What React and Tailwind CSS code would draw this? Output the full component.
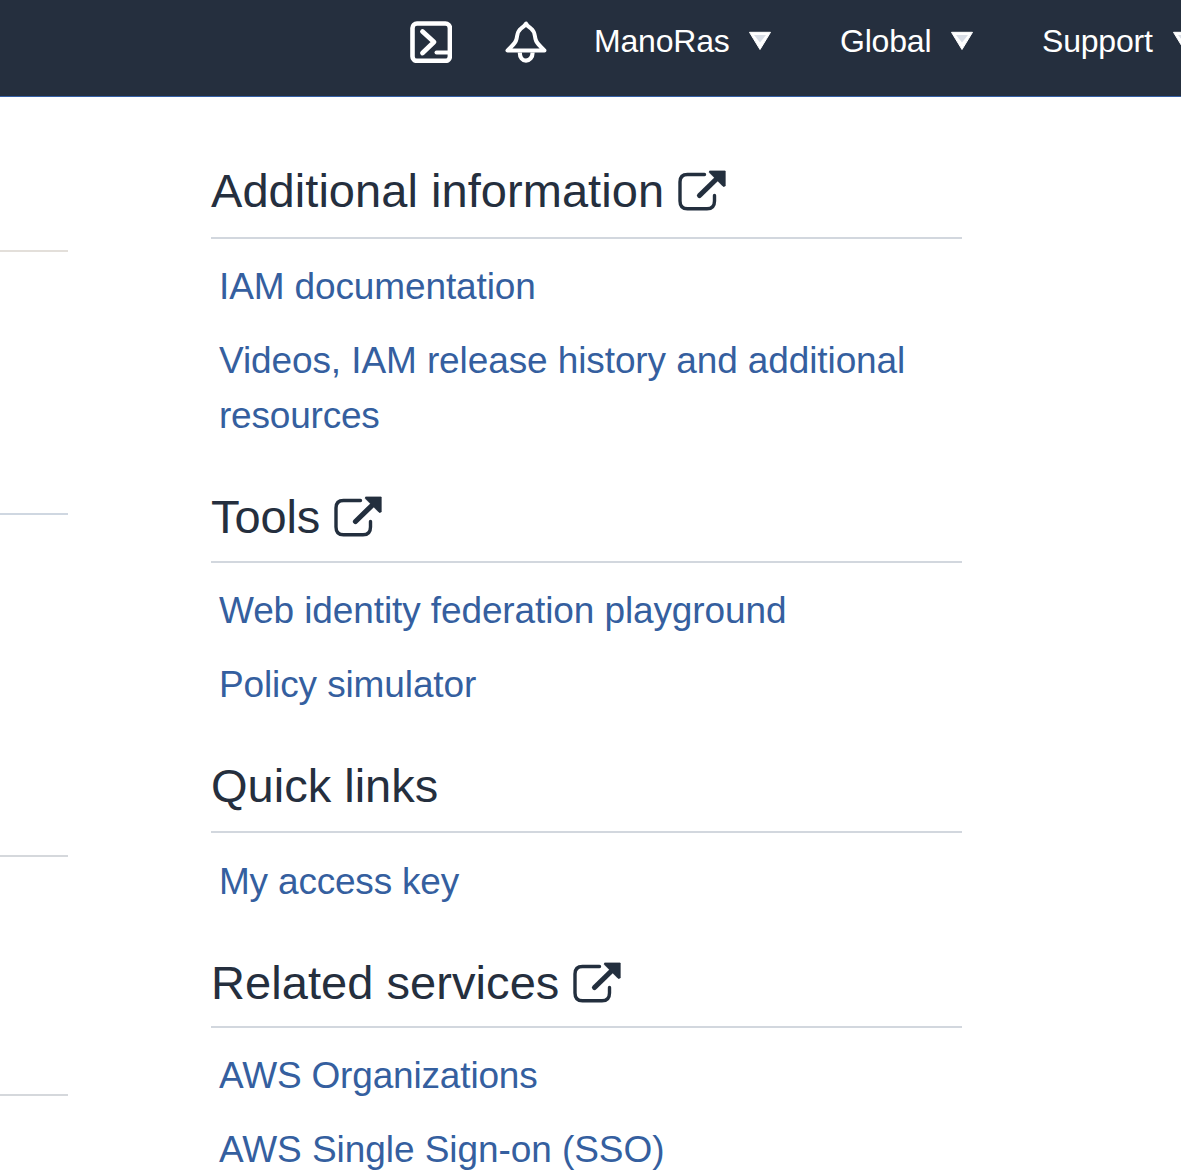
import React from "react";

const sections = [
  {
    title: "Additional information",
    external: true,
    spacing: "mt-[48px]",
    box: "h-[94px] pt-[16px]",
    titleTracking: "tracking-[0.05px]",
    listTop: "pt-[20px]",
    links: [
      { lines: ["IAM documentation"], tracking: ["tracking-[-0.12px]"] },
      {
        lines: ["Videos, IAM release history and additional", "resources"],
        tracking: ["tracking-[-0.1px]", "tracking-[-0.2px]"],
      },
    ],
  },
  {
    title: "Tools",
    external: true,
    spacing: "mt-[28px]",
    box: "h-[92px] pt-[16px]",
    titleTracking: "tracking-[-0.1px]",
    listTop: "pt-[20px]",
    links: [
      { lines: ["Web identity federation playground"], tracking: ["tracking-[-0.11px]"] },
      { lines: ["Policy simulator"], tracking: ["tracking-[-0.12px]"] },
    ],
  },
  {
    title: "Quick links",
    external: false,
    spacing: "mt-[28px]",
    box: "h-[93px] pt-[16px]",
    titleTracking: "tracking-[0px]",
    listTop: "pt-[21px]",
    links: [{ lines: ["My access key"], tracking: ["tracking-[-0.2px]"] }],
  },
  {
    title: "Related services",
    external: true,
    spacing: "mt-[28px]",
    box: "h-[91px] pt-[16px]",
    titleTracking: "tracking-[0.06px]",
    listTop: "pt-[20px]",
    links: [
      { lines: ["AWS Organizations"], tracking: ["tracking-[-0.17px]"] },
      { lines: ["AWS Single Sign-on (SSO)"], tracking: ["tracking-[-0.06px]"] },
    ],
  },
];

function ExternalIcon() {
  return (
    <svg className="ml-[13px] mt-[7px] h-[44px] w-[50px] shrink-0" viewBox="0 0 50 44" fill="none">
      <path
        d="M27.5 6.5H10.5Q3 6.5 3 14V33Q3 40.8 10.5 40.8H30Q37.5 40.8 37.5 33V27.5"
        stroke="#232f3e"
        strokeWidth="3.4"
        strokeLinecap="round"
      />
      <path d="M22.5 27.5L41 9.5" stroke="#232f3e" strokeWidth="5.2" strokeLinecap="round" />
      <path d="M32.5 3H48.2V18L46.2 18.4L32.4 4.6Z" fill="#232f3e" stroke="#232f3e" strokeWidth="0.8" strokeLinejoin="round" />
    </svg>
  );
}

function Caret() {
  return (
    <svg className="h-[20px] w-[24px] shrink-0" viewBox="0 0 24 20">
      <path d="M1.5 1.3H22.5L12 18.5Z" fill="#fff" stroke="#fff" strokeWidth="1" strokeLinejoin="round" />
      <path d="M6 4H18L12 11.5Z" fill="#d9dee6" />
    </svg>
  );
}

function Header() {
  return (
    <header className="flex h-[97px] w-full items-start overflow-hidden border-b border-[#3560a5] bg-[#252f3e] text-[32px] leading-[40px] text-white">
      <svg className="ml-[410px] mt-[21px] h-[42px] w-[42px] shrink-0" viewBox="0 0 42 42" fill="none" stroke="#fff">
        <rect x="2.5" y="2.5" width="37.4" height="37.4" rx="4.5" strokeWidth="4.6" />
        <path d="M12.5 10.5L24 21L12.5 32" strokeWidth="4.8" strokeLinecap="round" strokeLinejoin="round" />
        <path d="M26.5 31.5H40" strokeWidth="4" strokeLinecap="round" />
      </svg>
      <svg className="ml-[53px] mt-[21px] h-[42px] w-[42px] shrink-0" viewBox="0 0 42 42" fill="none" stroke="#fff">
        <path
          d="M21 2.5C20 5 18 6 16 7.5C12 10.5 12.5 14 11.5 18C10.5 23 6 25.5 2.5 29.5H39.5C36 25.5 31.5 23 30.5 18C29.5 14 30 10.5 26 7.5C24 6 22 5 21 2.5Z"
          strokeWidth="4"
          strokeLinejoin="round"
        />
        <path d="M14.8 31.5C14.8 36.5 17.5 39.6 21 39.6S27.6 36.5 27.6 31.5" strokeWidth="4.2" />
      </svg>
      <div className="ml-[47px] mt-[21px] flex w-[246px] shrink-0 items-center">
        <span className="w-[154px] tracking-[-0.2px]">ManoRas</span>
        <Caret />
      </div>
      <div className="mt-[21px] flex w-[202px] shrink-0 items-center">
        <span className="w-[110px] tracking-[-0.2px]">Global</span>
        <Caret />
      </div>
      <div className="mt-[21px] flex shrink-0 items-center">
        <span className="w-[130px] tracking-[-0.2px]">Support</span>
        <Caret />
      </div>
    </header>
  );
}

export default function App() {
  return (
    <div className="flex h-[1173px] w-[1181px] flex-col overflow-hidden bg-white font-['Liberation_Sans',Arial,sans-serif]">
      <Header />
      <div className="flex min-h-0 flex-1">
        <div className="w-[68px] shrink-0">
          <div className="mt-[153px] h-[2px] bg-[#e3dfda]" />
          <div className="mt-[261px] h-[2px] bg-[#cfd7e1]" />
          <div className="mt-[340px] h-[2px] bg-[#d5d8dc]" />
          <div className="mt-[237px] h-[2px] bg-[#d5d8dc]" />
        </div>
        <main className="ml-[143px] w-[751px] shrink-0">
          {sections.map((s) => (
            <section key={s.title} className={s.spacing}>
              <h2 className={"flex items-start border-b-2 border-[#d2d7de] text-[47px] leading-[60px] text-[#252f3e] " + s.box}>
                <span className={"whitespace-nowrap " + s.titleTracking}>{s.title}</span>
                {s.external && <ExternalIcon />}
              </h2>
              <div className={"flex flex-col gap-[19px] pl-[8px] text-[37px] leading-[55px] text-[#355f9f] " + s.listTop}>
                {s.links.map((l) => (
                  <a key={l.lines[0]} className="block">
                    {l.lines.map((t, j) => (
                      <span key={t} className={"block whitespace-nowrap " + l.tracking[j]}>
                        {t}
                      </span>
                    ))}
                  </a>
                ))}
              </div>
            </section>
          ))}
        </main>
      </div>
    </div>
  );
}
